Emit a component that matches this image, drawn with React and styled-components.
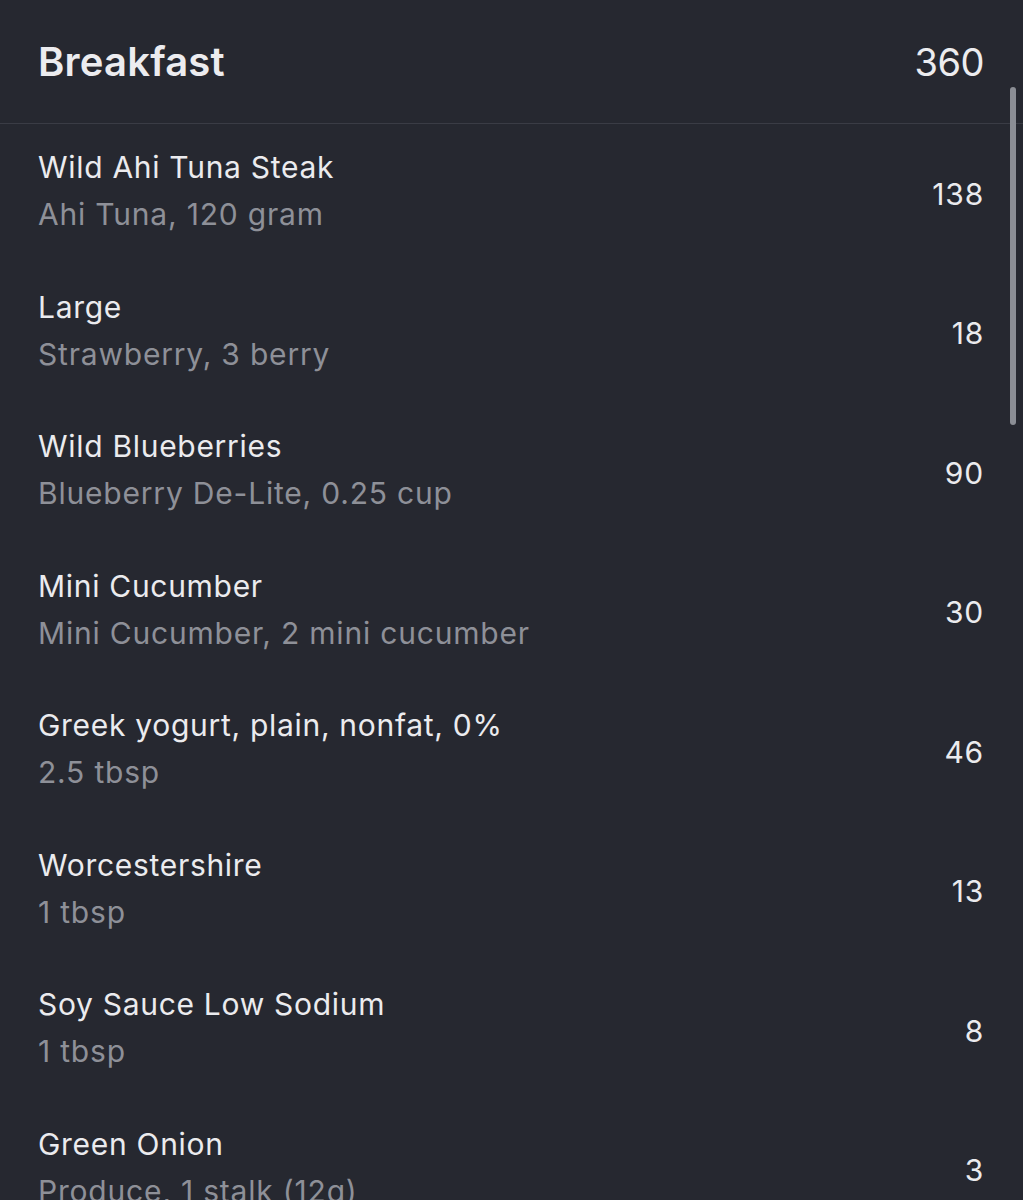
import React from 'react';
import styled, { createGlobalStyle } from 'styled-components';

const items = [
  { name: 'Wild Ahi Tuna Steak', detail: 'Ahi Tuna, 120 gram', cal: 138 },
  { name: 'Large', detail: 'Strawberry, 3 berry', cal: 18 },
  { name: 'Wild Blueberries', detail: 'Blueberry De-Lite, 0.25 cup', cal: 90 },
  { name: 'Mini Cucumber', detail: 'Mini Cucumber, 2 mini cucumber', cal: 30 },
  { name: 'Greek yogurt, plain, nonfat, 0%', detail: '2.5 tbsp', cal: 46 },
  { name: 'Worcestershire', detail: '1 tbsp', cal: 13 },
  { name: 'Soy Sauce Low Sodium', detail: '1 tbsp', cal: 8 },
  { name: 'Green Onion', detail: 'Produce, 1 stalk (12g)', cal: 3 },
];

export default function App () {
  return (
    <Screen>
      <GlobalStyle />
      <Header>
        <MealTitle>Breakfast</MealTitle>
        <MealTotal>360</MealTotal>
      </Header>
      <List>
        {items.map((item) => (
          <Row key={item.name}>
            <Info>
              <Name>{item.name}</Name>
              <Detail>{item.detail}</Detail>
            </Info>
            <Calories>{item.cal}</Calories>
          </Row>
        ))}
      </List>
      <ScrollThumb />
    </Screen>
  );
}

const GlobalStyle = createGlobalStyle`
  html, body {
    margin: 0;
    background: #262830;
  }
  body {
    font-family: Inter, "Open Sans", sans-serif;
  }
`;

const Screen = styled.div`
  position: relative;
  width: 1023px;
  height: 1200px;
  overflow: hidden;
  background: #262830;
  color: #ebebee;
`;

const Header = styled.div`
  display: flex;
  align-items: center;
  justify-content: space-between;
  height: 123px;
  padding: 0 39px 0 38px;
  border-bottom: 1px solid #3a3c45;
`;

const MealTitle = styled.h1`
  margin: 0;
  font-size: 40px;
  font-weight: 600;
  letter-spacing: 0.2px;
  color: #ececef;
`;

const MealTotal = styled.span`
  font-size: 38px;
  font-weight: 400;
  letter-spacing: -0.5px;
  color: #ececef;
`;

const List = styled.div`
  display: flex;
  flex-direction: column;
`;

const Row = styled.div`
  display: flex;
  align-items: center;
  justify-content: space-between;
  height: 139.5px;
  padding: 0 39px 0 38px;
`;

const Info = styled.div`
  display: flex;
  flex-direction: column;
  gap: 9px;
  padding-bottom: 6px;
`;

const Name = styled.div`
  font-size: 30px;
  line-height: 38px;
  letter-spacing: 0.7px;
  color: #ebebee;
`;

const Detail = styled.div`
  font-size: 30px;
  line-height: 38px;
  letter-spacing: 0.8px;
  color: #8e9098;
`;

const Calories = styled.span`
  font-size: 30px;
  letter-spacing: 0.8px;
  color: #ebebee;
`;

const ScrollThumb = styled.div`
  position: absolute;
  top: 87px;
  right: 7px;
  width: 6px;
  height: 338px;
  border-radius: 3px;
  background: #8b8e95;
`;
